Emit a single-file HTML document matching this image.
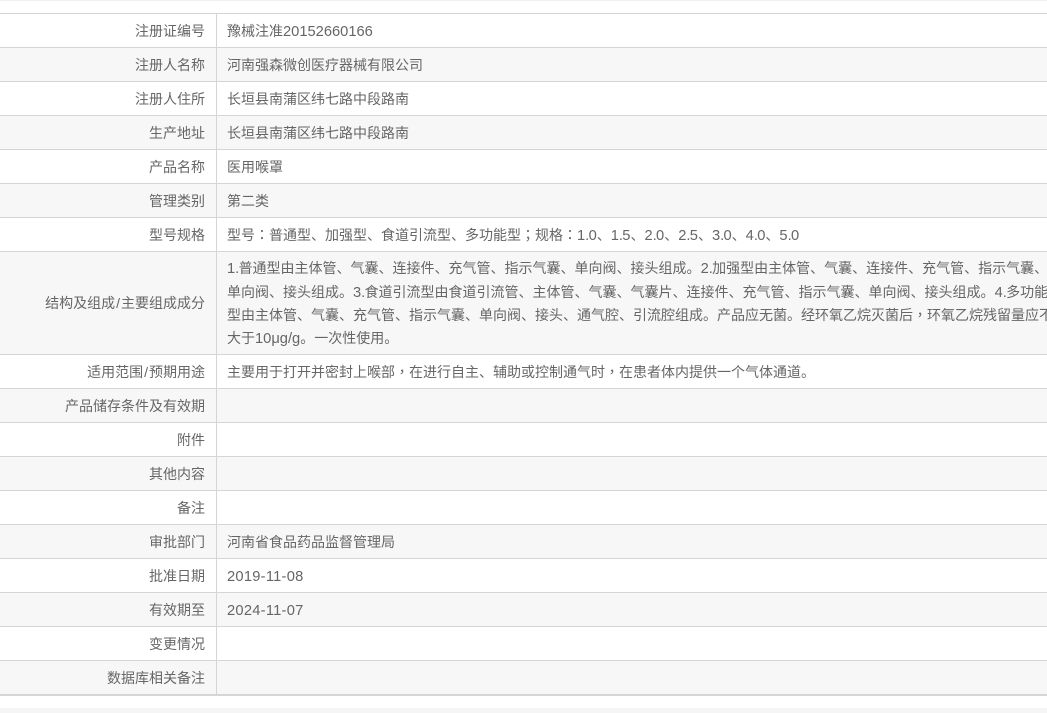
<!DOCTYPE html>
<html><head><meta charset="utf-8"><style>
html,body{margin:0;padding:0;background:#fff;}
body{width:1047px;height:713px;overflow:hidden;position:relative;font:14px/20px "Liberation Sans","Noto Sans CJK SC",sans-serif;color:#666;}
.r{position:absolute;left:0;width:1047px;border-top:1px solid #d5d5d5;box-sizing:border-box;}
.g{background:#f7f7f7;}
.l{position:absolute;left:0;width:205px;text-align:right;white-space:nowrap;}
.v{position:absolute;left:216px;top:0;bottom:0;border-left:1px solid #d5d5d5;}
.t{position:absolute;left:227px;white-space:nowrap;}
i{font-style:normal;font-size:14.7px;}
i.d{letter-spacing:.25px;}
s{text-decoration:none;letter-spacing:-.7px;}
b{font-weight:normal;font-family:"Noto Sans CJK TC",sans-serif;}
u{text-decoration:none;font-size:14px;letter-spacing:1px;padding-left:1px;}
</style></head><body>
<div style="position:absolute;left:0;top:0;width:1047px;height:1px;background:#f2f2f2"></div>
<div class="r" style="top:13px;height:34px"><div class="v"></div><div class="l" style="top:7px">注册证编号</div><div class="t" style="top:7px">豫械注准<i>20152660166</i></div></div>
<div class="r g" style="top:47px;height:34px"><div class="v"></div><div class="l" style="top:7px">注册人名称</div><div class="t" style="top:7px">河南强森微创医疗器械有限公司</div></div>
<div class="r" style="top:81px;height:34px"><div class="v"></div><div class="l" style="top:7px">注册人住所</div><div class="t" style="top:7px">长垣县南蒲区纬七路中段路南</div></div>
<div class="r g" style="top:115px;height:34px"><div class="v"></div><div class="l" style="top:7px">生产地址</div><div class="t" style="top:7px">长垣县南蒲区纬七路中段路南</div></div>
<div class="r" style="top:149px;height:34px"><div class="v"></div><div class="l" style="top:7px">产品名称</div><div class="t" style="top:7px">医用喉罩</div></div>
<div class="r g" style="top:183px;height:34px"><div class="v"></div><div class="l" style="top:7px">管理类别</div><div class="t" style="top:7px">第二类</div></div>
<div class="r" style="top:217px;height:34px"><div class="v"></div><div class="l" style="top:7px">型号规格</div><div class="t" style="top:7px">型号<b>：</b>普通型、加强型、食道引流型、多功能型<b>；</b>规格<b>：</b><i>1<s>.</s>0</i>、<i>1<s>.</s>5</i>、<i>2<s>.</s>0</i>、<i>2<s>.</s>5</i>、<i>3<s>.</s>0</i>、<i>4<s>.</s>0</i>、<i>5<s>.</s>0</i></div></div>
<div class="r g" style="top:251px;height:103px"><div class="v"></div><div class="l" style="top:41px">结构及组成<u>/</u>主要组成成分</div>
<div class="t" style="top:6px"><i>1<s>.</s></i>普通型由主体管、气囊、连接件、充气管、指示气囊、单向阀、接头组成。<i>2<s>.</s></i>加强型由主体管、气囊、连接件、充气管、指示气囊、</div>
<div class="t" style="top:30px">单向阀、接头组成。<i>3<s>.</s></i>食道引流型由食道引流管、主体管、气囊、气囊片、连接件、充气管、指示气囊、单向阀、接头组成。<i>4<s>.</s></i>多功能</div>
<div class="t" style="top:53px">型由主体管、气囊、充气管、指示气囊、单向阀、接头、通气腔、引流腔组成。产品应无菌。经环氧乙烷灭菌后<b>，</b>环氧乙烷残留量应不</div>
<div class="t" style="top:76px">大于<i>10μg/g</i>。一次性使用。</div></div>
<div class="r" style="top:354px;height:34px"><div class="v"></div><div class="l" style="top:7px">适用范围<u>/</u>预期用途</div><div class="t" style="top:7px">主要用于打开并密封上喉部<b>，</b>在进行自主、辅助或控制通气时<b>，</b>在患者体内提供一个气体通道。</div></div>
<div class="r g" style="top:388px;height:34px"><div class="v"></div><div class="l" style="top:7px">产品储存条件及有效期</div></div>
<div class="r" style="top:422px;height:34px"><div class="v"></div><div class="l" style="top:7px">附件</div></div>
<div class="r g" style="top:456px;height:34px"><div class="v"></div><div class="l" style="top:7px">其他内容</div></div>
<div class="r" style="top:490px;height:34px"><div class="v"></div><div class="l" style="top:7px">备注</div></div>
<div class="r g" style="top:524px;height:34px"><div class="v"></div><div class="l" style="top:7px">审批部门</div><div class="t" style="top:7px">河南省食品药品监督管理局</div></div>
<div class="r" style="top:558px;height:34px"><div class="v"></div><div class="l" style="top:7px">批准日期</div><div class="t" style="top:7px"><i class="d">2019-11-08</i></div></div>
<div class="r g" style="top:592px;height:34px"><div class="v"></div><div class="l" style="top:7px">有效期至</div><div class="t" style="top:7px"><i class="d">2024-11-07</i></div></div>
<div class="r" style="top:626px;height:34px"><div class="v"></div><div class="l" style="top:7px">变更情况</div></div>
<div class="r g" style="top:660px;height:34px"><div class="v"></div><div class="l" style="top:7px">数据库相关备注</div></div>
<div style="position:absolute;left:0;top:694px;width:1047px;height:2px;background:#d5d5d5"></div>
<div style="position:absolute;left:0;top:708px;width:1047px;height:5px;background:#f5f5f5"></div>
</body></html>
